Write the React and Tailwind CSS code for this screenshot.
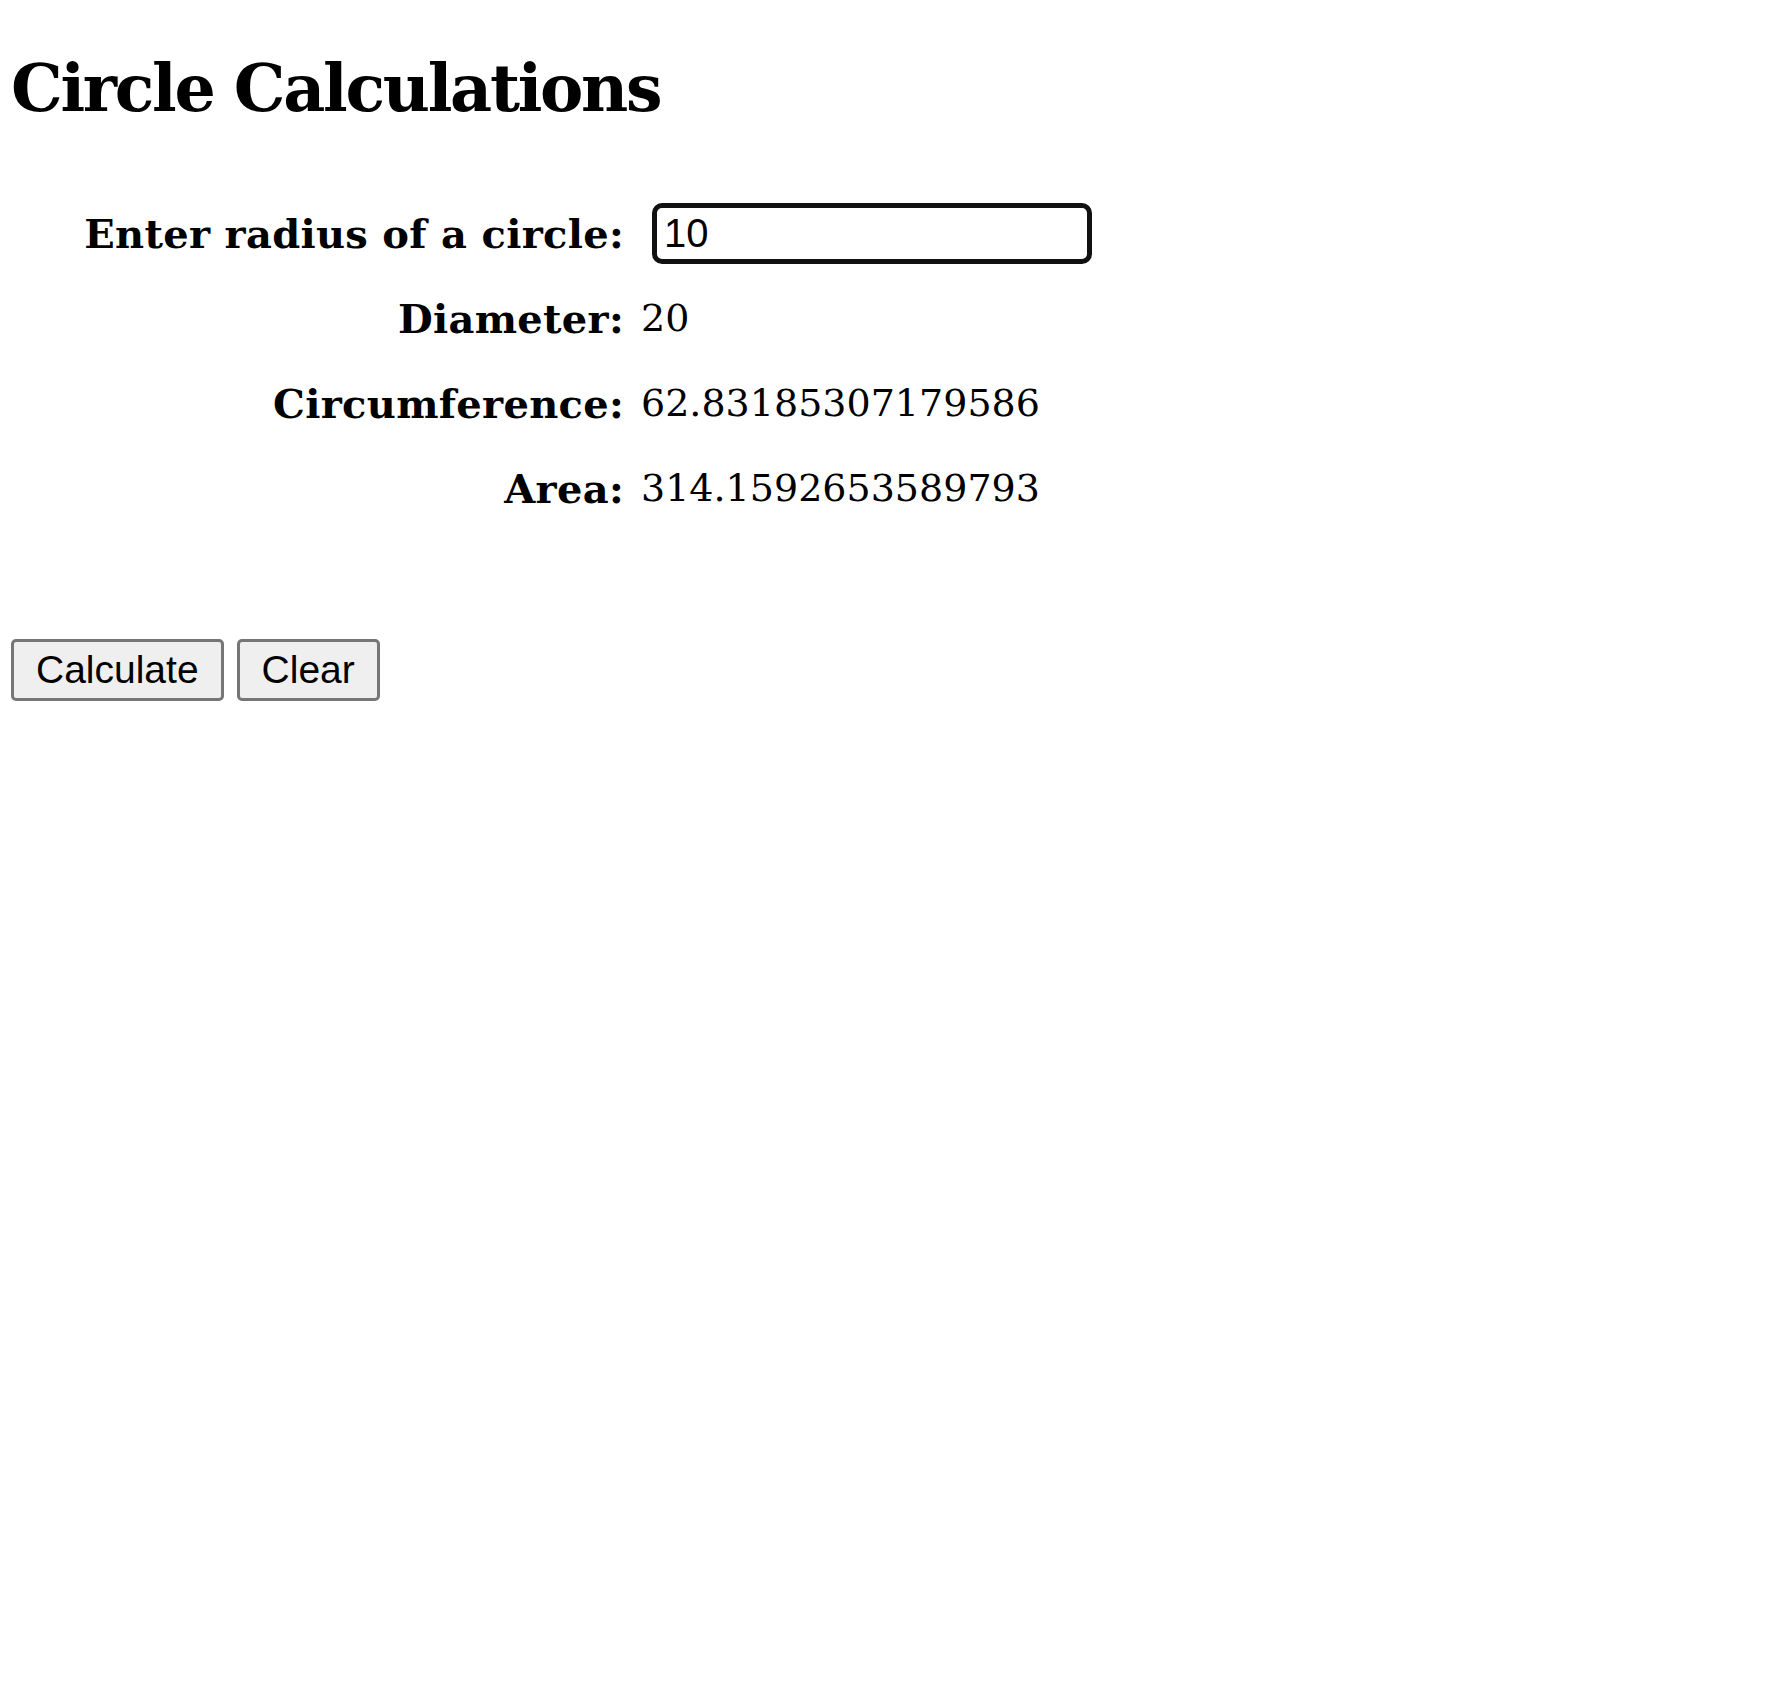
import React, { useState } from 'react';

const serif = { fontFamily: '"DejaVu Serif", serif' };

const App = () => {
  const [radius, setRadius] = useState('10');
  const [result, setResult] = useState({
    diameter: 20,
    circumference: 2 * Math.PI * 10,
    area: Math.PI * 100,
  });

  const calculate = () => {
    const r = parseFloat(radius);
    if (isNaN(r)) return;
    setResult({ diameter: r * 2, circumference: 2 * Math.PI * r, area: Math.PI * r * r });
  };

  const clear = () => {
    setRadius('');
    setResult({ diameter: '', circumference: '', area: '' });
  };

  const rows = [
    { label: 'Diameter:', value: result.diameter },
    { label: 'Circumference:', value: result.circumference },
    { label: 'Area:', value: result.area },
  ];

  return (
    <div className="min-h-screen bg-white text-black pl-[11px] pt-[50px]">
      <h1 className="text-[65px] leading-[76px] font-bold tracking-[-2.3px]" style={serif}>
        Circle Calculations
      </h1>

      {/* Inputs and results */}
      <div className="mt-[65px] flex flex-col" style={serif}>
        <div className="flex items-center h-[85px] gap-[17px]">
          <label className="w-[613px] text-right text-[40px] font-bold tracking-[0.3px]">Enter radius of a circle:</label>
          <input
            type="text"
            value={radius}
            onChange={(e) => setRadius(e.target.value)}
            className="ml-[11px] w-[440px] h-[61px] border-[5px] border-[#111] rounded-[10px] pl-[7px] text-[40px] outline-none"
            style={{ fontFamily: '"Liberation Sans", Arial, sans-serif' }}
          />
        </div>
        {rows.map((row, index) => (
          <div key={index} className="flex items-center h-[85px] gap-[17px]">
            <span className="w-[613px] text-right text-[40px] font-bold tracking-[0.3px]">{row.label}</span>
            <span className="text-[38px]">{row.value}</span>
          </div>
        ))}
      </div>

      {/* Buttons */}
      <div className="mt-[108px] flex gap-[13px]" style={{ fontFamily: '"Liberation Sans", Arial, sans-serif' }}>
        <button
          onClick={calculate}
          className="h-[62px] px-[22px] flex items-center text-[39px] bg-[#efefef] border-[3px] border-[#767676] rounded-[5px]"
        >
          Calculate
        </button>
        <button
          onClick={clear}
          className="h-[62px] px-[22px] flex items-center text-[39px] bg-[#efefef] border-[3px] border-[#767676] rounded-[5px]"
        >
          Clear
        </button>
      </div>
    </div>
  );
};

export default App;
